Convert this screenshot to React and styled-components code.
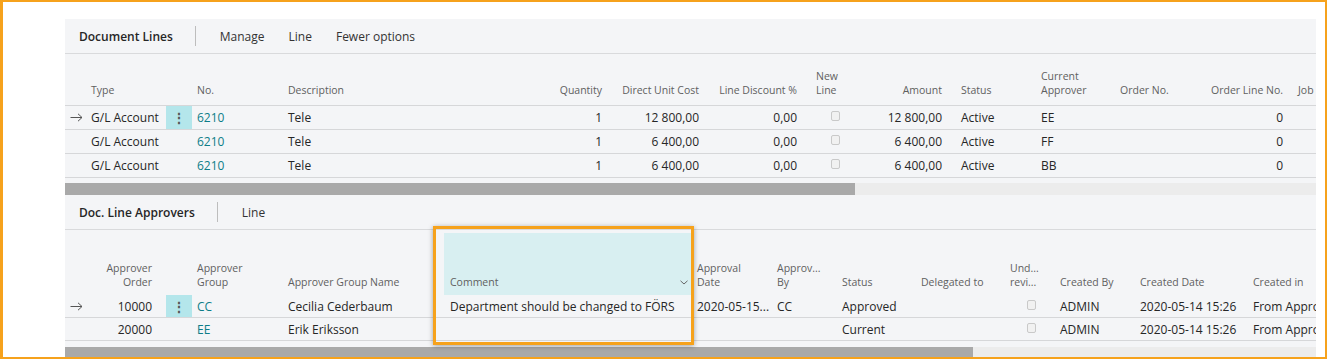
import React from "react";
import styled, { createGlobalStyle } from "styled-components";

const GlobalStyle = createGlobalStyle`
  html, body {
    margin: 0;
    padding: 0;
    background: #fff;
  }
  body {
    font-family: "Open Sans", "Noto Sans", sans-serif;
    color: #262626;
  }
`;

const lineCols = [
  { id: "arrow", w: 22 },
  { id: "type", label: "Type", w: 79, pl: 4 },
  { id: "dots", w: 26 },
  { id: "no", label: "No.", w: 92, pl: 5, link: true },
  { id: "desc", label: "Description", w: 236, pl: 4 },
  { id: "qty", label: "Quantity", w: 86, right: true, pr: 4 },
  { id: "cost", label: "Direct Unit Cost", w: 97, right: true, pr: 4 },
  { id: "disc", label: "Line Discount %", w: 98, right: true, pr: 4 },
  { id: "newLine", label: ["New", "Line"], w: 79, pl: 15, check: 15 },
  { id: "amount", label: "Amount", w: 66, right: true, pr: 4 },
  { id: "status", label: "Status", w: 91, pl: 15 },
  { id: "approver", label: ["Current", "Approver"], w: 79, pl: 4 },
  { id: "orderNo", label: "Order No.", w: 84, pl: 4 },
  { id: "orderLine", label: "Order Line No.", w: 87, right: true, pr: 4 },
  { id: "job", label: "Job", w: 80, pl: 11 },
];

const lineRows = [
  { type: "G/L Account", no: "6210", desc: "Tele", qty: "1", cost: "12 800,00", disc: "0,00", amount: "12 800,00", status: "Active", approver: "EE", orderLine: "0" },
  { type: "G/L Account", no: "6210", desc: "Tele", qty: "1", cost: "6 400,00", disc: "0,00", amount: "6 400,00", status: "Active", approver: "FF", orderLine: "0" },
  { type: "G/L Account", no: "6210", desc: "Tele", qty: "1", cost: "6 400,00", disc: "0,00", amount: "6 400,00", status: "Active", approver: "BB", orderLine: "0" },
];

const approverCols = [
  { id: "arrow", w: 22 },
  { id: "order", label: ["Approver", "Order"], w: 79, right: true, pr: 14 },
  { id: "dots", w: 26 },
  { id: "group", label: ["Approver", "Group"], w: 92, pl: 5, link: true },
  { id: "name", label: "Approver Group Name", w: 160, pl: 4 },
  { id: "comment", label: "Comment", w: 247, pl: 6, menu: true },
  { id: "date", label: ["Approval", "Date"], w: 82, pl: 6 },
  { id: "by", label: ["Approv...", "By"], w: 65, pl: 4 },
  { id: "status", label: "Status", w: 79, pl: 4 },
  { id: "delegated", label: "Delegated to", w: 89, pl: 4 },
  { id: "review", label: ["Und...", "revi..."], w: 50, pl: 4, check: 17 },
  { id: "createdBy", label: "Created By", w: 80, pl: 4 },
  { id: "createdDate", label: "Created Date", w: 113, pl: 4 },
  { id: "createdIn", label: "Created in", w: 100, pl: 4 },
];

const approverRows = [
  { order: "10000", group: "CC", name: "Cecilia Cederbaum", comment: "Department should be changed to FÖRS", date: "2020-05-15...", by: "CC", status: "Approved", createdBy: "ADMIN", createdDate: "2020-05-14 15:26", createdIn: "From Approval" },
  { order: "20000", group: "EE", name: "Erik Eriksson", comment: "", date: "", by: "", status: "Current", createdBy: "ADMIN", createdDate: "2020-05-14 15:26", createdIn: "From Approval" },
];

const Frame = styled.div`
  position: relative;
  box-sizing: border-box;
  width: 1327px;
  height: 359px;
  border-style: solid;
  border-color: #f6a21c;
  border-width: 2px 2px 2px 3px;
  padding: 17px 9px 0 62px;
  overflow: hidden;
  background: #fff;
`;

const TopMark = styled.div`
  position: absolute;
  left: 859px;
  top: -2px;
  width: 51px;
  height: 2px;
  background: #9a9a9a;
`;

const Panel = styled.div`
  display: flex;
  flex-direction: column;
  background: #f4f5f7;
  overflow: hidden;
  height: 340px;
`;

const Toolbar = styled.div`
  box-sizing: border-box;
  height: 35px;
  flex-shrink: 0;
  display: flex;
  align-items: center;
  gap: 24px;
  padding: 0 14px;
  border-bottom: 1px solid #d9dadc;
`;

const ToolTitle = styled.span`
  font-size: 12px;
  font-weight: 600;
  color: #262626;
  margin-right: -2px;
`;

const ToolAction = styled.span`
  font-size: 12px;
  color: #333;
`;

const Divider = styled.span`
  width: 1px;
  height: 20px;
  background: #bdbdbd;
`;

const Grid = styled.div`
  display: grid;
  grid-template-columns: ${(p) => p.$cols};
  flex-shrink: 0;
`;

const HeadCell = styled.div`
  box-sizing: border-box;
  height: ${(p) => p.$h}px;
  display: flex;
  flex-direction: column;
  justify-content: flex-end;
  align-items: ${(p) => (p.$right ? "flex-end" : "stretch")};
  text-align: ${(p) => (p.$right ? "right" : "left")};
  padding: 0 ${(p) => p.$pr || 0}px ${(p) => p.$pb}px ${(p) => p.$pl || 0}px;
  font-size: 10.5px;
  line-height: 14px;
  color: #5f5f5f;
  white-space: nowrap;
  overflow: hidden;
  border-bottom: ${(p) => (p.$line ? "1px solid #d6d7d9" : "none")};
  background: ${(p) => (p.$hl ? "#d8eff1" : "transparent")};
  margin-top: ${(p) => (p.$hl ? "3px" : "0")};
  ${(p) => p.$hl && `height: ${p.$h - 3}px;`}
`;

const MenuLabel = styled.div`
  display: flex;
  align-items: center;
  justify-content: space-between;
  padding-right: 3px;
`;

const Cell = styled.div`
  box-sizing: border-box;
  height: ${(p) => p.$h}px;
  display: flex;
  align-items: center;
  justify-content: ${(p) => (p.$right ? "flex-end" : "flex-start")};
  padding: 0 ${(p) => p.$pr || 0}px 0 ${(p) => p.$pl || 0}px;
  font-size: 12px;
  color: ${(p) => (p.$link ? "#0d7d88" : "#262626")};
  white-space: nowrap;
  overflow: hidden;
  border-bottom: 1px solid #d6d7d9;
`;

const DotsCell = styled(Cell)`
  justify-content: center;
  background: ${(p) => (p.$active ? "#b4e6eb" : "transparent")};
  color: #555;
  font-size: 14px;
  font-weight: 700;
`;

const Check = styled.span`
  align-self: flex-start;
  box-sizing: border-box;
  width: 9px;
  height: 10px;
  margin-top: 5px;
  margin-left: ${(p) => p.$offset}px;
  border: 1px solid #c9c9c9;
  border-radius: 2px;
  background: #f1f1f1;
`;

const Scrollbar = styled.div`
  display: flex;
  height: 12px;
  flex-shrink: 0;
  margin-top: ${(p) => p.$gap}px;
  background: #ececec;
`;

const Thumb = styled.div`
  width: ${(p) => p.$w}px;
  background: #a9a9a9;
`;

const HighlightBox = styled.div`
  position: absolute;
  left: 430px;
  top: 224px;
  width: 261px;
  height: 119px;
  box-sizing: border-box;
  border: 3px solid #f6a21c;
  box-shadow: 0 1px 5px rgba(0, 0, 0, 0.35);
  pointer-events: none;
`;

function Arrow() {
  return (
    <svg width="13" height="9" viewBox="0 0 13 9">
      <path d="M0.5 4.5H12M8 0.8L12 4.5L8 8.2" fill="none" stroke="#555" strokeWidth="1" />
    </svg>
  );
}

function Chevron() {
  return (
    <svg width="8" height="5" viewBox="0 0 8 5">
      <path d="M0.5 0.8L4 4L7.5 0.8" fill="none" stroke="#666" strokeWidth="1" />
    </svg>
  );
}

function Label({ text }) {
  if (Array.isArray(text)) {
    return (
      <>
        <span>{text[0]}</span>
        <span>{text[1]}</span>
      </>
    );
  }
  return <span>{text}</span>;
}

function Table({ cols, rows, headHeight, headPad, headLine, rowHeight }) {
  const template = cols.map((c) => `${c.w}px`).join(" ");
  return (
    <Grid $cols={template}>
      {cols.map((c) => (
        <HeadCell
          key={c.id}
          $h={headHeight}
          $pb={headPad}
          $pl={c.pl}
          $pr={c.pr}
          $right={c.right}
          $line={headLine}
          $hl={c.menu}
        >
          {c.menu ? (
            <MenuLabel>
              <span>{c.label}</span>
              <Chevron />
            </MenuLabel>
          ) : (
            c.label && <Label text={c.label} />
          )}
        </HeadCell>
      ))}
      {rows.map((r, i) =>
        cols.map((c) => {
          if (c.id === "arrow") {
            return (
              <Cell key={c.id + i} $h={rowHeight} $pl={5}>
                {i === 0 && <Arrow />}
              </Cell>
            );
          }
          if (c.id === "dots") {
            return (
              <DotsCell key={c.id + i} $h={rowHeight} $active={i === 0}>
                {i === 0 && "⋮"}
              </DotsCell>
            );
          }
          return (
            <Cell
              key={c.id + i}
              $h={rowHeight}
              $pl={c.pl}
              $pr={c.pr}
              $right={c.right}
              $link={c.link}
            >
              {c.check ? <Check $offset={c.check} /> : r[c.id]}
            </Cell>
          );
        })
      )}
    </Grid>
  );
}

export default function App() {
  return (
    <>
      <GlobalStyle />
      <Frame>
        <TopMark />
        <Panel>
          <Toolbar>
            <ToolTitle>Document Lines</ToolTitle>
            <Divider />
            <ToolAction>Manage</ToolAction>
            <ToolAction>Line</ToolAction>
            <ToolAction>Fewer options</ToolAction>
          </Toolbar>
          <Table
            cols={lineCols}
            rows={lineRows}
            headHeight={52}
            headPad={8}
            headLine
            rowHeight={24}
          />
          <Scrollbar $gap={5}>
            <Thumb $w={790} />
          </Scrollbar>
          <Toolbar>
            <ToolTitle>Doc. Line Approvers</ToolTitle>
            <Divider />
            <ToolAction>Line</ToolAction>
          </Toolbar>
          <Table
            cols={approverCols}
            rows={approverRows}
            headHeight={65}
            headPad={6}
            rowHeight={23}
          />
          <Scrollbar $gap={6}>
            <Thumb $w={908} />
          </Scrollbar>
        </Panel>
        <HighlightBox />
      </Frame>
    </>
  );
}
